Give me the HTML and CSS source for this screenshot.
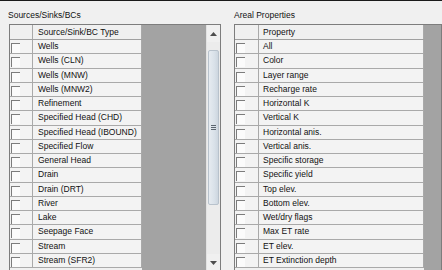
FILE: index.html
```html
<!DOCTYPE html>
<html lang="en">
<head>
    <meta charset="UTF-8">
    <title>Sources/Sinks/BCs</title>
    <link rel="stylesheet" href="styles.css">
</head>
<body>
    <div class="panels">
        <div class="group group-left">
            <div class="caption">Sources/Sinks/BCs</div>
            <div class="grid">
                <div class="table table-left">
                    <div class="row head"><div class="cb"></div><div class="name">Source/Sink/BC Type</div></div>
                    <div class="row"><div class="cb"><span class="box"></span></div><div class="name">Wells</div></div>
                    <div class="row"><div class="cb"><span class="box"></span></div><div class="name">Wells (CLN)</div></div>
                    <div class="row"><div class="cb"><span class="box"></span></div><div class="name">Wells (MNW)</div></div>
                    <div class="row"><div class="cb"><span class="box"></span></div><div class="name">Wells (MNW2)</div></div>
                    <div class="row"><div class="cb"><span class="box"></span></div><div class="name">Refinement</div></div>
                    <div class="row"><div class="cb"><span class="box"></span></div><div class="name">Specified Head (CHD)</div></div>
                    <div class="row"><div class="cb"><span class="box"></span></div><div class="name">Specified Head (IBOUND)</div></div>
                    <div class="row"><div class="cb"><span class="box"></span></div><div class="name">Specified Flow</div></div>
                    <div class="row"><div class="cb"><span class="box"></span></div><div class="name">General Head</div></div>
                    <div class="row"><div class="cb"><span class="box"></span></div><div class="name">Drain</div></div>
                    <div class="row"><div class="cb"><span class="box"></span></div><div class="name">Drain (DRT)</div></div>
                    <div class="row"><div class="cb"><span class="box"></span></div><div class="name">River</div></div>
                    <div class="row"><div class="cb"><span class="box"></span></div><div class="name">Lake</div></div>
                    <div class="row"><div class="cb"><span class="box"></span></div><div class="name">Seepage Face</div></div>
                    <div class="row"><div class="cb"><span class="box"></span></div><div class="name">Stream</div></div>
                    <div class="row"><div class="cb"><span class="box"></span></div><div class="name">Stream (SFR2)</div></div>
                </div>
                <div class="blank"></div>
                <div class="scrollbar">
                    <div class="sb-btn">
                        <svg width="7" height="4" viewBox="0 0 7 4"><path d="M0 4 L3.5 0 L7 4 Z" fill="#4d4d4d"/></svg>
                    </div>
                    <div class="sb-track">
                        <div class="thumb">
                            <div class="grip"><i></i><i></i><i></i></div>
                        </div>
                    </div>
                    <div class="sb-btn">
                        <svg width="7" height="4" viewBox="0 0 7 4"><path d="M0 0 L3.5 4 L7 0 Z" fill="#4d4d4d"/></svg>
                    </div>
                </div>
            </div>
        </div>

        <div class="group group-right">
            <div class="caption">Areal Properties</div>
            <div class="grid">
                <div class="table table-right">
                    <div class="row head"><div class="cb"></div><div class="name">Property</div></div>
                    <div class="row"><div class="cb"><span class="box"></span></div><div class="name">All</div></div>
                    <div class="row"><div class="cb"><span class="box"></span></div><div class="name">Color</div></div>
                    <div class="row"><div class="cb"><span class="box"></span></div><div class="name">Layer range</div></div>
                    <div class="row"><div class="cb"><span class="box"></span></div><div class="name">Recharge rate</div></div>
                    <div class="row"><div class="cb"><span class="box"></span></div><div class="name">Horizontal K</div></div>
                    <div class="row"><div class="cb"><span class="box"></span></div><div class="name">Vertical K</div></div>
                    <div class="row"><div class="cb"><span class="box"></span></div><div class="name">Horizontal anis.</div></div>
                    <div class="row"><div class="cb"><span class="box"></span></div><div class="name">Vertical anis.</div></div>
                    <div class="row"><div class="cb"><span class="box"></span></div><div class="name">Specific storage</div></div>
                    <div class="row"><div class="cb"><span class="box"></span></div><div class="name">Specific yield</div></div>
                    <div class="row"><div class="cb"><span class="box"></span></div><div class="name">Top elev.</div></div>
                    <div class="row"><div class="cb"><span class="box"></span></div><div class="name">Bottom elev.</div></div>
                    <div class="row"><div class="cb"><span class="box"></span></div><div class="name">Wet/dry flags</div></div>
                    <div class="row"><div class="cb"><span class="box"></span></div><div class="name">Max ET rate</div></div>
                    <div class="row"><div class="cb"><span class="box"></span></div><div class="name">ET elev.</div></div>
                    <div class="row"><div class="cb"><span class="box"></span></div><div class="name">ET Extinction depth</div></div>
                </div>
                <div class="blank"></div>
            </div>
        </div>
    </div>
</body>
</html>
```

FILE: styles.css
```css
html, body {
    height: 100%;
}
body {
    margin: 0;
    background: #f0f0f0;
    border-top: 1px solid #1a1a1a;
    box-sizing: border-box;
    overflow: hidden;
    font-family: "Liberation Sans", Arial, sans-serif;
    font-size: 8.5px;
    color: #111;
}
.panels {
    display: flex;
    gap: 12px;
    padding: 8px 0 0 8px;
}
.group-left {
    width: 213px;
    flex-shrink: 0;
}
.group-right {
    flex: 1;
}
.caption {
    height: 12px;
    line-height: 12px;
    margin-bottom: 3px;
}
.group-right .caption {
    padding-left: 1px;
}
.grid {
    display: flex;
    margin-left: 1px;
    height: 246px;
    border: 1px solid #7d7d7d;
    border-bottom: none;
    background: #a3a3a3;
}
.table {
    background: #f0f0f0;
    flex-shrink: 0;
}
.table-left {
    width: 132px;
}
.table-right {
    width: 189px;
}
.blank {
    flex: 1;
    background: #a3a3a3;
}
.row {
    display: flex;
    height: 14.27px;
    box-sizing: border-box;
    border-bottom: 1px solid #a9a9a9;
    background: #f3f3f3;
}
.row.head {
    height: 15px;
    background: #f0f0f0;
    border-bottom: 1px solid #a0a0a0;
}
.cb {
    width: 24px;
    flex-shrink: 0;
    box-sizing: border-box;
    border-right: 1px solid #a9a9a9;
    padding: 3px 0 0 1px;
}
.table-left .cb {
    width: 23px;
}
.name {
    flex: 1;
    padding-left: 4px;
    border-right: 1px solid #a9a9a9;
    line-height: 13px;
    white-space: nowrap;
    overflow: hidden;
}
.table-left .name {
    padding-left: 5px;
}
.head .name {
    line-height: 14px;
}
.box {
    display: block;
    width: 8px;
    height: 9px;
    border-top: 1px solid #7c7c7c;
    border-left: 1px solid #7c7c7c;
    background: #fbfbfb;
}
.scrollbar {
    width: 14px;
    flex-shrink: 0;
    display: flex;
    flex-direction: column;
    background: #ececec;
    border-left: 1px solid #e2e2e2;
    box-sizing: border-box;
}
.sb-btn {
    height: 17px;
    display: flex;
    align-items: center;
    justify-content: center;
    background: #f0f0f0;
}
.sb-track {
    flex: 1;
    padding-top: 8px;
}
.thumb {
    height: 155px;
    margin: 0 1px;
    box-sizing: border-box;
    border: 1px solid #b8c2cc;
    border-radius: 2px;
    background: linear-gradient(to right, #e6ebf0, #d9e1e9 60%, #cdd6df);
    display: flex;
    align-items: center;
    justify-content: center;
}
.grip {
    display: flex;
    flex-direction: column;
    gap: 1px;
}
.grip i {
    display: block;
    width: 5px;
    height: 1px;
    background: #5c6670;
}
```
